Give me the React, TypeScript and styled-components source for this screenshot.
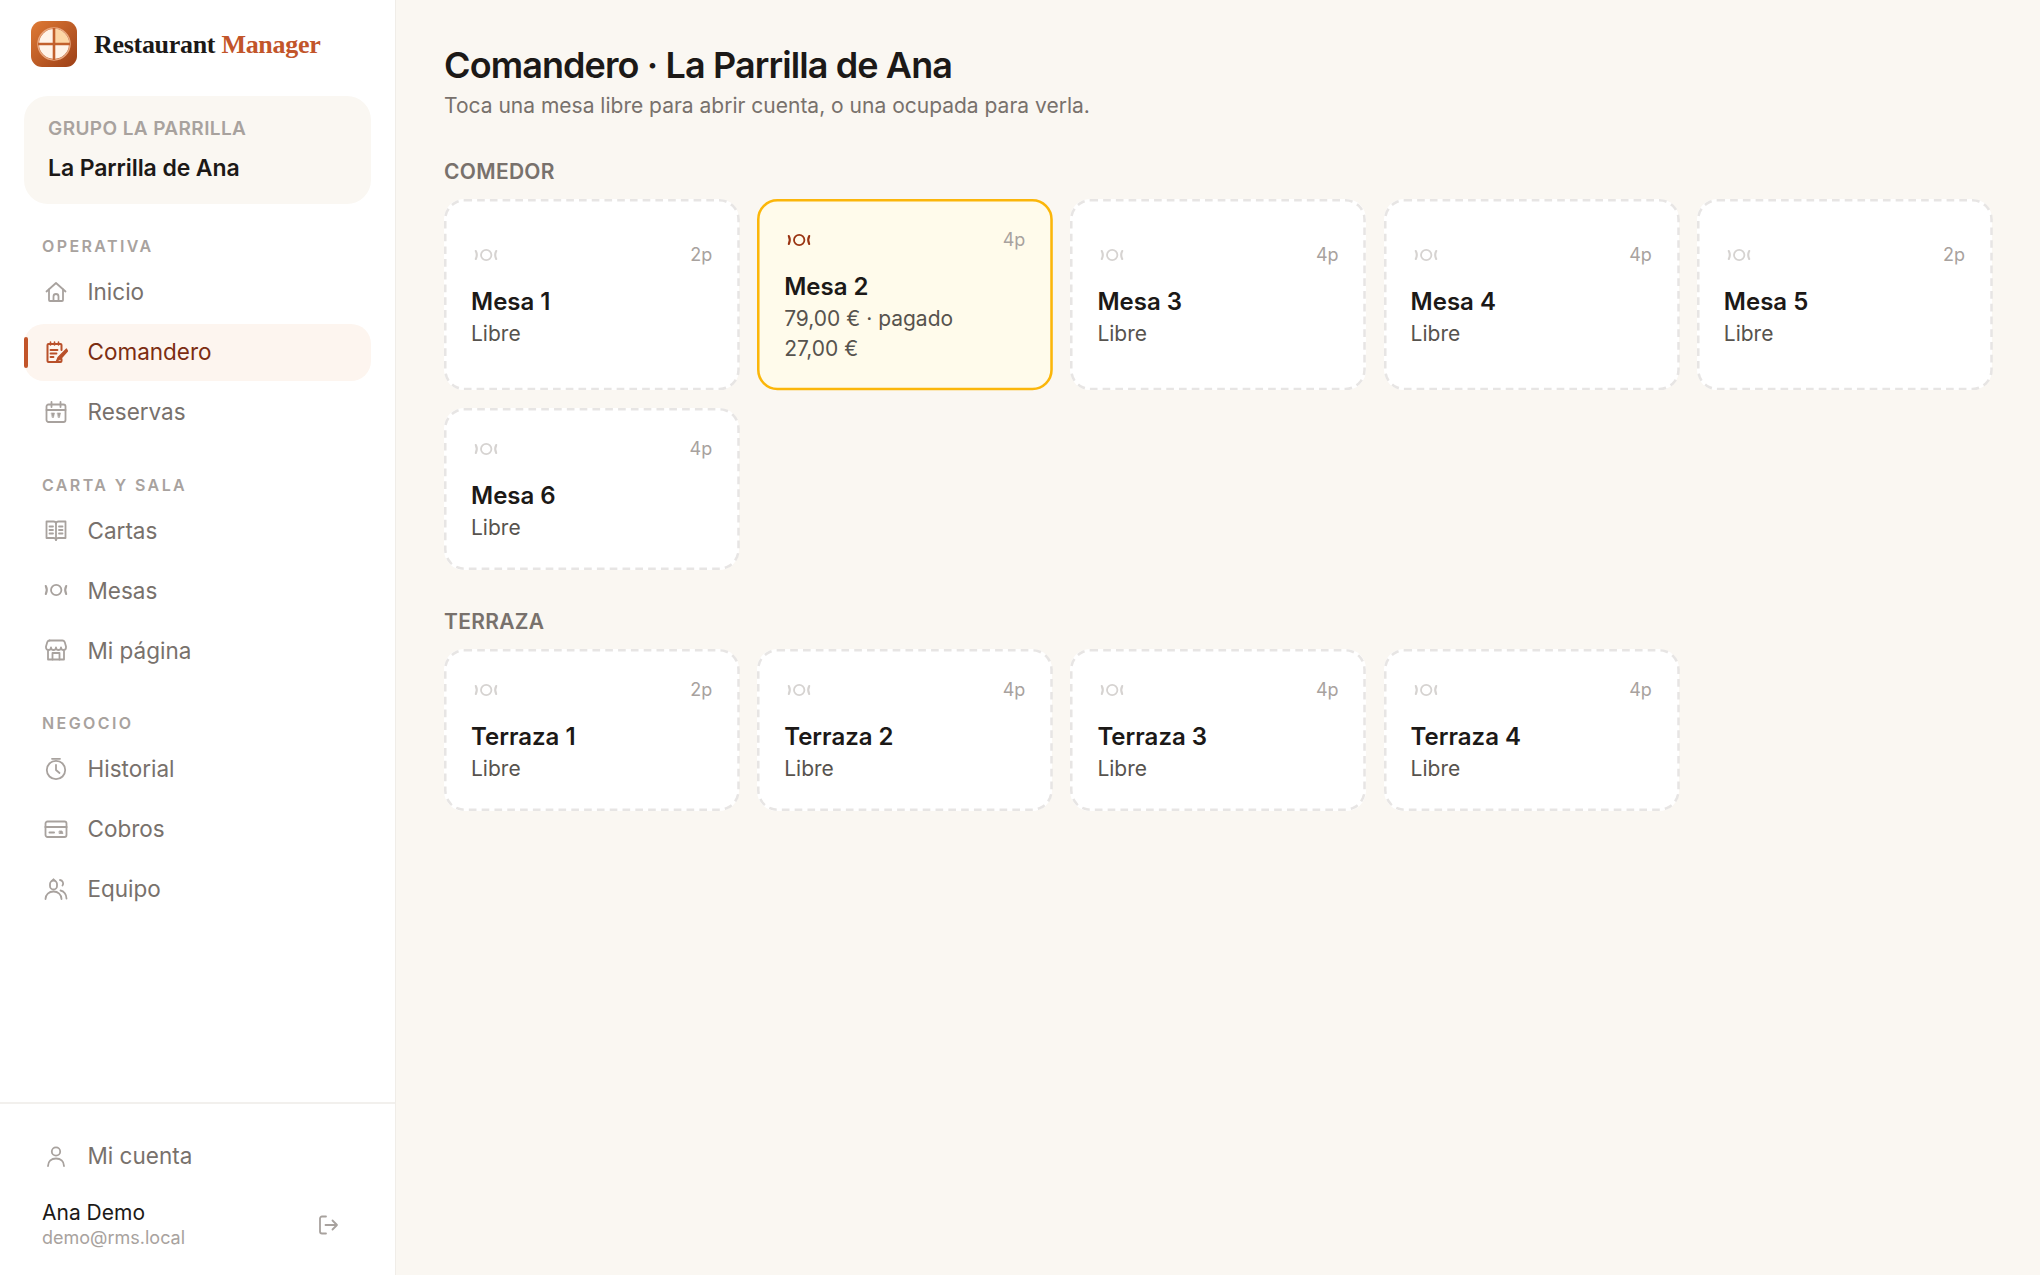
import { ReactNode } from "react";
import { createGlobalStyle, styled } from "styled-components";

const GlobalStyle = createGlobalStyle`
  html, body { margin: 0; padding: 0; height: 100%; }
  body { font-family: Inter, "Liberation Sans", sans-serif; background: #faf7f2; color: #1c1917; }
  * { box-sizing: border-box; }
`;

function Icon({ children, size = 24 }: { children: ReactNode; size?: number }) {
  return (
    <svg width={size} height={size} viewBox="0 0 24 24" fill="none" stroke="currentColor" strokeWidth="1.8" strokeLinecap="round" strokeLinejoin="round">
      {children}
    </svg>
  );
}

const MesaIcon = () => (
  <Icon>
    <circle cx="12.2" cy="12" r="5.2" />
    <path d="M1.8 8c1.3 2.6 1.3 5.4 0 8" strokeWidth="2.1" />
    <path d="M22.2 8c-1.3 2.6-1.3 5.4 0 8" strokeWidth="2.1" />
  </Icon>
);

const HomeIcon = () => (
  <Icon>
    <path d="M2.5 11.5 12 3l9.5 8.5" />
    <path d="M5 9.5V20a1 1 0 0 0 1 1h12a1 1 0 0 0 1-1V9.5" />
    <path d="M9.5 21v-4.5a2.5 2.5 0 0 1 5 0V21" />
  </Icon>
);

const NoteIcon = () => (
  <Icon>
    <path d="M17.5 10V5a1 1 0 0 0-1-1h-12a1 1 0 0 0-1 1v16a1 1 0 0 0 1 1h12a1 1 0 0 0 1-1v-2" strokeWidth="2" />
    <path d="M6.5 2v3M10.5 2v3M14.5 2v3" strokeWidth="1.6" />
    <path d="M6.5 10h7M6.5 13.5h6M6.5 17h3" strokeWidth="1.8" />
    <path d="M22.5 9 14 17.5l-1.5 3.5 3.5-1.5L23.5 11z" fill="currentColor" strokeWidth="1.2" />
  </Icon>
);

const CalendarIcon = () => (
  <Icon>
    <rect x="2.5" y="4.5" width="19" height="17.5" rx="2" />
    <path d="M2.5 10h19M7.5 2v5M16.5 2v5" />
    <path d="M7.5 13h3l-1 4.5h-1zM13.5 13h3l-1 4.5h-1z" fill="currentColor" strokeWidth="0.6" />
  </Icon>
);

const BookIcon = () => (
  <Icon>
    <path d="M2.5 3.5h7c1.4 0 2.5.8 2.5 2 0-1.2 1.1-2 2.5-2h7v16.5h-7c-1.4 0-2.5.8-2.5 2 0-1.2-1.1-2-2.5-2h-7z" />
    <path d="M12 5.5V22" />
    <path d="M5.5 8.5h3.5M5.5 12h3.5M5.5 15.5h3.5M15 8.5h3.5M15 12h3.5M15 15.5h3.5" />
  </Icon>
);

const StoreIcon = () => (
  <Icon>
    <path d="M5.5 2.5h13c1 0 1.8.7 2.2 1.6L22 8.5" />
    <path d="M5.5 2.5c-1 0-1.8.7-2.2 1.6L2 8.5" />
    <path d="M2 9.5a2.5 2.5 0 0 0 5 0 2.5 2.5 0 0 0 5 0 2.5 2.5 0 0 0 5 0 2.5 2.5 0 0 0 5 0" />
    <path d="M4 13v8.5h16V13" />
    <path d="M8.5 21.5V15h7v6.5" />
  </Icon>
);

const TimerIcon = () => (
  <Icon>
    <circle cx="12" cy="13" r="9.2" />
    <path d="M8 1.8h8" />
    <path d="M12 8v5l3.5 3" />
  </Icon>
);

const CardIcon = () => (
  <Icon>
    <rect x="1.5" y="4.5" width="21" height="15.5" rx="2" />
    <path d="M1.5 10h21" strokeWidth="2.2" />
    <path d="M5.5 15.5h4.5" strokeWidth="2" />
    <path d="M15.5 14h2.5l1 2.5h-3.5z" fill="currentColor" strokeWidth="0.8" />
  </Icon>
);

const UsersIcon = () => (
  <Icon>
    <path d="M6 7a3.5 3.5 0 0 1 7 0v2a3.5 3.5 0 0 1-7 0z" />
    <path d="M8 3.6 9.5 2l1.5 1.6" strokeWidth="1.2" />
    <path d="M1.5 22c0-4.5 3.5-7.5 8-7.5s8 3 8 7.5" />
    <path d="M16 3a3.5 3.5 0 0 1 2.5 5.5" />
    <path d="M16.5 13.5c3.5.5 6 4 6 8" />
  </Icon>
);

const PersonIcon = () => (
  <Icon>
    <circle cx="12" cy="7.5" r="4.2" />
    <path d="M4 22c0-5 3.5-7.5 8-7.5s8 2.5 8 7.5" />
  </Icon>
);

const LogoutIcon = () => (
  <Icon>
    <path d="M10 3.5H6a2 2 0 0 0-2 2v13a2 2 0 0 0 2 2h4" />
    <path d="M9.5 12H21M16.5 7.5 21 12l-4.5 4.5" />
  </Icon>
);

const Page = styled.div`
  display: flex;
  min-height: 1275px;
`;

const Sidebar = styled.aside`
  width: 396px;
  flex: none;
  height: 1275px;
  background: #fff;
  border-right: 1px solid #f0ede8;
  display: flex;
  flex-direction: column;
`;

const Brand = styled.div`
  height: 87px;
  padding: 0 31px;
  display: flex;
  align-items: center;
  gap: 17px;
`;

const BrandText = styled.div`
  padding-top: 2px;
  font-family: "Liberation Serif", serif;
  font-weight: 700;
  font-size: 26px;
  letter-spacing: -0.3px;
  color: #1c1917;
  span { color: #c2552a; }
`;

const OrgCard = styled.div`
  margin: 9px 24px 0;
  height: 108px;
  background: #faf7f2;
  border-radius: 24px;
  padding: 21px 24px;
`;

const OrgGroup = styled.div`
  font-size: 19px;
  font-weight: 600;
  line-height: 24px;
  letter-spacing: 0.4px;
  color: #a8a29e;
`;

const OrgName = styled.div`
  margin-top: 14px;
  font-size: 23px;
  font-weight: 600;
  line-height: 26px;
  letter-spacing: -0.1px;
  color: #1c1917;
`;

const Nav = styled.nav`
  flex: 1;
  padding: 32px 24px 0;
`;

const NavSection = styled.div`
  margin-bottom: 33.5px;
`;

const SectionLabel = styled.div`
  padding-left: 18px;
  font-size: 16px;
  font-weight: 600;
  line-height: 20px;
  letter-spacing: 2.4px;
  color: #a8a29e;
  margin-bottom: 8px;
`;

const NavItem = styled.a<{ $active?: boolean }>`
  position: relative;
  display: flex;
  align-items: center;
  gap: 19.5px;
  height: 57px;
  margin-bottom: 3px;
  padding: 0 0 2px 20px;
  font-size: 22.5px;
  font-weight: 400;
  color: ${(p) => (p.$active ? "#7c2d12" : "#78716c")};
  background: ${(p) => (p.$active ? "#fdf5ef" : "transparent")};
  border-radius: 20px;
  svg { color: ${(p) => (p.$active ? "#b9502a" : "#a8a29e")}; flex: none; }
  ${(p) =>
    p.$active &&
    `&::before {
      content: "";
      position: absolute;
      left: 0;
      top: 13px;
      bottom: 13px;
      width: 4px;
      border-radius: 2px;
      background: #c2552a;
    }`}
`;

const SideFooter = styled.div`
  border-top: 2px solid #f2f0ed;
  height: 173px;
  padding: 24px 24px 0;
`;

const UserRow = styled.div`
  display: flex;
  align-items: center;
  justify-content: space-between;
  padding: 12px 31px 0 18px;
`;

const UserName = styled.div`
  font-size: 21px;
  line-height: 26px;
  color: #1c1917;
`;

const UserMail = styled.div`
  font-size: 18px;
  line-height: 24px;
  color: #a8a29e;
`;

const SignOut = styled.span`
  display: flex;
  color: #a8a29e;
`;

const Main = styled.main`
  flex: 1;
  padding: 41px 48px;
`;

const Title = styled.h1`
  margin: 0;
  font-size: 36px;
  font-weight: 600;
  line-height: 48px;
  letter-spacing: -0.9px;
  color: #1c1917;
`;

const Subtitle = styled.p`
  margin: 3px 0 0;
  font-size: 21px;
  line-height: 28px;
  color: #78716c;
`;

const Zone = styled.section`
  margin-top: 38px;

  & + & { margin-top: 37.5px; }
`;

const ZoneTitle = styled.h2`
  margin: 0 0 13px;
  font-size: 21px;
  font-weight: 600;
  line-height: 28px;
  color: #78716c;
  letter-spacing: 0.3px;
`;

const Grid = styled.div`
  display: grid;
  grid-template-columns: repeat(5, 1fr);
  gap: 18px;
`;

// the outline sits on a scaled overlay: a 2px border scaled up keeps the reference's long dashes
const MesaCard = styled.div<{ $busy?: boolean }>`
  position: relative;
  padding: ${(p) => (p.$busy ? "27px 27px 26px" : "27px 27px 27px")};
  display: flex;
  flex-direction: column;
  justify-content: center;
  background: ${(p) => (p.$busy ? "#fffbeb" : "#fff")};
  border-radius: 20px;

  &::before {
    content: "";
    box-sizing: border-box;
    position: absolute;
    top: 0;
    left: 0;
    width: calc(100% / 1.275);
    height: calc(100% / 1.275);
    transform: scale(1.275);
    transform-origin: top left;
    border: 2px ${(p) => (p.$busy ? "solid #fbb60a" : "dashed #e7e5e4")};
    border-radius: 16px;
  }
`;

const CardTop = styled.div<{ $busy?: boolean }>`
  display: flex;
  align-items: center;
  justify-content: space-between;
  margin-bottom: 15px;
  font-size: 18px;
  line-height: 28px;
  color: #a8a29e;
  svg { margin-left: 3px; color: ${(p) => (p.$busy ? "#9a3412" : "#d6d3d1")}; }
`;

const MesaName = styled.div`
  font-size: 24px;
  font-weight: 600;
  line-height: 35px;
  color: #1c1917;
`;

const MesaInfo = styled.div`
  font-size: 21px;
  line-height: 30px;
  color: #57534e;
`;

type Mesa = { name: string; seats: string; busy?: string[] };

const comedor: Mesa[] = [
  { name: "Mesa 1", seats: "2p" },
  { name: "Mesa 2", seats: "4p", busy: ["79,00 € · pagado", "27,00 €"] },
  { name: "Mesa 3", seats: "4p" },
  { name: "Mesa 4", seats: "4p" },
  { name: "Mesa 5", seats: "2p" },
  { name: "Mesa 6", seats: "4p" },
];

const terraza: Mesa[] = [
  { name: "Terraza 1", seats: "2p" },
  { name: "Terraza 2", seats: "4p" },
  { name: "Terraza 3", seats: "4p" },
  { name: "Terraza 4", seats: "4p" },
];

function MesaTile({ mesa }: { mesa: Mesa }) {
  return (
    <MesaCard $busy={!!mesa.busy}>
      <CardTop $busy={!!mesa.busy}>
        <MesaIcon />
        <span>{mesa.seats}</span>
      </CardTop>
      <MesaName>{mesa.name}</MesaName>
      {mesa.busy ? (
        mesa.busy.map((line) => <MesaInfo key={line}>{line}</MesaInfo>)
      ) : (
        <MesaInfo>Libre</MesaInfo>
      )}
    </MesaCard>
  );
}

export default function App() {
  return (
    <Page>
      <GlobalStyle />
      <Sidebar>
        <Brand>
          <svg width="46" height="46" viewBox="0 0 46 46">
            <defs>
              <linearGradient id="lg" x1="0" y1="0" x2="1" y2="1">
                <stop offset="0" stopColor="#df7a35" />
                <stop offset="1" stopColor="#9c3f17" />
              </linearGradient>
            </defs>
            <rect width="46" height="46" rx="11" fill="url(#lg)" />
            <circle cx="23" cy="23" r="16" fill="none" stroke="#e9a77f" strokeWidth="1.5" />
            <circle cx="23" cy="23" r="15" fill="#fff3e8" />
            <path d="M23 8a15 15 0 0 1 15 15H23z" fill="#fdd6a5" />
            <path d="M23 7v32M7 23h32" stroke="#c2602c" strokeWidth="2.6" />
          </svg>
          <BrandText>
            Restaurant <span>Manager</span>
          </BrandText>
        </Brand>
        <OrgCard>
          <OrgGroup>GRUPO LA PARRILLA</OrgGroup>
          <OrgName>La Parrilla de Ana</OrgName>
        </OrgCard>
        <Nav>
          <NavSection>
            <SectionLabel>OPERATIVA</SectionLabel>
            <NavItem><HomeIcon />Inicio</NavItem>
            <NavItem $active><NoteIcon />Comandero</NavItem>
            <NavItem><CalendarIcon />Reservas</NavItem>
          </NavSection>
          <NavSection>
            <SectionLabel>CARTA Y SALA</SectionLabel>
            <NavItem><BookIcon />Cartas</NavItem>
            <NavItem><MesaIcon />Mesas</NavItem>
            <NavItem><StoreIcon />Mi página</NavItem>
          </NavSection>
          <NavSection>
            <SectionLabel>NEGOCIO</SectionLabel>
            <NavItem><TimerIcon />Historial</NavItem>
            <NavItem><CardIcon />Cobros</NavItem>
            <NavItem><UsersIcon />Equipo</NavItem>
          </NavSection>
        </Nav>
        <SideFooter>
          <NavItem><PersonIcon />Mi cuenta</NavItem>
          <UserRow>
            <div>
              <UserName>Ana Demo</UserName>
              <UserMail>demo@rms.local</UserMail>
            </div>
            <SignOut><LogoutIcon /></SignOut>
          </UserRow>
        </SideFooter>
      </Sidebar>
      <Main>
        <Title>Comandero · La Parrilla de Ana</Title>
        <Subtitle>Toca una mesa libre para abrir cuenta, o una ocupada para verla.</Subtitle>
        <Zone>
          <ZoneTitle>COMEDOR</ZoneTitle>
          <Grid>
            {comedor.map((m) => <MesaTile key={m.name} mesa={m} />)}
          </Grid>
        </Zone>
        <Zone>
          <ZoneTitle>TERRAZA</ZoneTitle>
          <Grid>
            {terraza.map((m) => <MesaTile key={m.name} mesa={m} />)}
          </Grid>
        </Zone>
      </Main>
    </Page>
  );
}
